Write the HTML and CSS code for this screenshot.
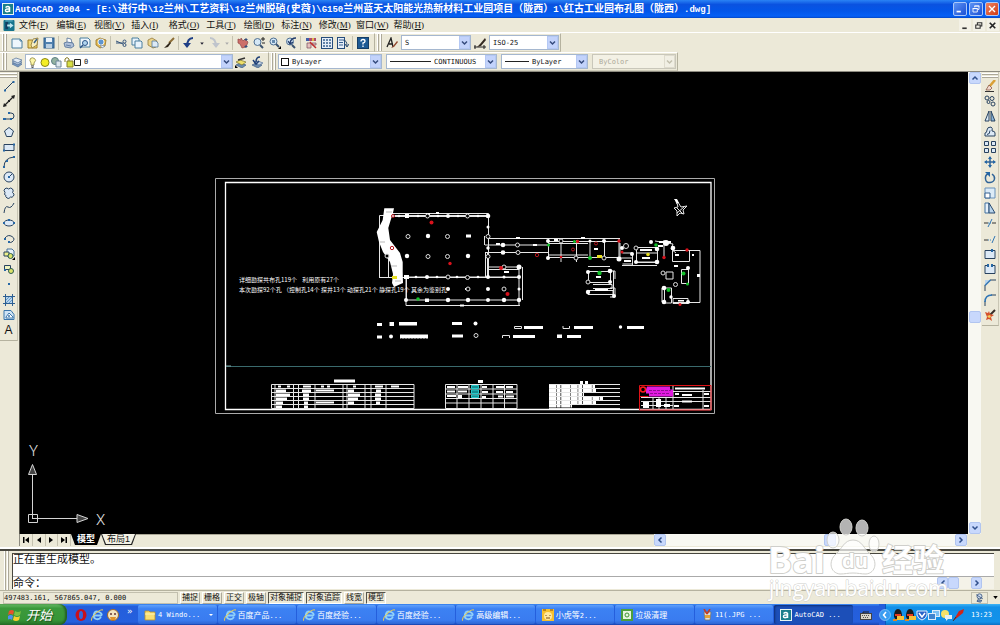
FILE: index.html
```html
<!DOCTYPE html>
<html lang="zh-CN">
<head>
    <meta charset="UTF-8">
    <meta name="viewport" content="width=device-width, initial-scale=1.0">
    <title>AutoCAD 2004</title>
    <link rel="stylesheet" href="styles.css">
</head>
<body>
    <header class="titlebar">
        <svg class="app-icon" viewBox="0 0 12 12"><rect width="12" height="12" fill="#e8f4f4"/><rect x="1" y="1" width="10" height="10" fill="#1b7f8c"/><path d="M3.500 4.500q2.500-2 4 0v4.500M7.500 6q-4-.5-4 1.500t4 .5" fill="none" stroke="#fff" stroke-width="1.500"/></svg>
        <h1><span class="latin">AutoCAD 2004 - [E:\</span>进行中<span class="latin">\12</span>兰州<span class="latin">\</span>工艺资料<span class="latin">\12</span>兰州脱硝<span class="latin">(</span>史薇<span class="latin">)\G150</span>兰州蓝天太阳能光热新材料工业园项目（陇西）<span class="latin">1\</span>红古工业园布孔图（陇西）<span class="latin">.dwg]</span></h1>
        <div class="win-buttons">
            <button aria-label="最小化"><svg viewBox="0 0 14 14"><path d="M3 10h5" stroke="#fff" stroke-width="2"/></svg></button>
            <button aria-label="还原"><svg viewBox="0 0 14 14" fill="none" stroke="#fff"><path d="M5.500 5V3.500h5v4H9M3.500 6.500h5v4h-5zM3 6.500h6M5 3.500h6"/></svg></button>
            <button class="close" aria-label="关闭"><svg viewBox="0 0 14 14"><path d="M3.500 3.500l7 7M10.500 3.500l-7 7" stroke="#fff" stroke-width="1.600"/></svg></button>
        </div>
    </header>

    <nav class="menubar">
        <svg class="doc-icon" viewBox="0 0 12 12"><rect width="12" height="12" rx="1" fill="#17748c"/><path d="M2 2h3v8H2z" fill="#123f62"/><path d="M4 5h3V3l4 3-4 3V7H4z" fill="#bfe6f0"/><path d="M2 1h8" stroke="#7cc5d8"/></svg>
        <div class="menus">
            <button>文件(<u>F</u>)</button>
            <button>编辑(<u>E</u>)</button>
            <button>视图(<u>V</u>)</button>
            <button>插入(<u>I</u>)</button>
            <button>格式(<u>O</u>)</button>
            <button>工具(<u>T</u>)</button>
            <button>绘图(<u>D</u>)</button>
            <button>标注(<u>N</u>)</button>
            <button>修改(<u>M</u>)</button>
            <button>窗口(<u>W</u>)</button>
            <button>帮助(<u>H</u>)</button>
        </div>
        <div class="doc-buttons">
            <button aria-label="最小化图形"><svg viewBox="0 0 10 10"><path d="M3 7.500h4" stroke="#333" stroke-width="1.500"/></svg></button>
            <button aria-label="还原图形"><svg viewBox="0 0 10 10" fill="none" stroke="#333"><path d="M4 4V2.500h4v3H7M2.500 4.500h4v3h-4z"/></svg></button>
            <button aria-label="关闭图形"><svg viewBox="0 0 10 10"><path d="M2.500 2.500l5 5M7.500 2.500l-5 5" stroke="#222" stroke-width="1.500"/></svg></button>
        </div>
    </nav>

    <div class="toolbars">
        <div class="bar-row">
            <div class="band">
                <button class="tool" aria-label="新建"><svg viewBox="0 0 12 12"><path d="M1 2h8l2 2v7H1z" fill="#eef6fc" stroke="#4b7f9f"/><path d="M9 2v2h2" fill="none" stroke="#4b7f9f"/></svg></button>
                <button class="tool" aria-label="打开"><svg viewBox="0 0 12 12"><path d="M1 3h4l1 1h4v7H1z" fill="#f0d878" stroke="#a07c20"/><path d="M4 8l2-6 5-1-1 7-5 3z" fill="#f8efc0" stroke="#8b7430" stroke-width=".8"/><path d="M7 6l3-4" stroke="#3e6288" stroke-width="1.500"/></svg></button>
                <button class="tool" aria-label="保存"><svg viewBox="0 0 12 12"><rect x="1" y="1" width="10" height="10" fill="#4f80ae" stroke="#2c5d8c"/><rect x="3" y="1" width="6" height="4" fill="#e9f2fa"/><rect x="3" y="7" width="6" height="4" fill="#b9cfe2"/></svg></button>
                <span class="sep"></span>
                <button class="tool" aria-label="打印"><svg viewBox="0 0 12 12" stroke="#516f96" stroke-width=".8"><path d="M4 1l4 1 1 4H4z" fill="#fff"/><path d="M1 6l3-1 6 1 1 3-3 2-6-1z" fill="#aebfd8"/><path d="M3 8l5 1" fill="none"/></svg></button>
                <button class="tool" aria-label="打印预览"><svg viewBox="0 0 12 12"><path d="M1 1h8l2 2v7H1z" fill="#eef6fc" stroke="#4b7f9f"/><circle cx="6" cy="6" r="2.500" fill="#b3d6f0" stroke="#2c5588"/><path d="M4 8l-3 3" stroke="#2c5588" stroke-width="1.500"/></svg></button>
                <button class="tool" aria-label="发布"><svg viewBox="0 0 12 12"><path d="M1 3l4-2 6 2-1 6-5 2-4-3z" fill="#e2b94f" stroke="#94742c" stroke-width=".8"/><circle cx="6" cy="5" r="3" fill="#5e95cf" stroke="#fff" stroke-width=".8"/><path d="M5 8l5 1-3 2z" fill="#eef3fa" stroke="#627da1" stroke-width=".6"/></svg></button>
                <span class="sep"></span>
                <button class="tool" aria-label="剪切"><svg viewBox="0 0 12 12" fill="none" stroke="#35547a"><path d="M1 4l7 3M1 6h7" /><circle cx="9.500" cy="4.500" r="1.500"/><circle cx="9.500" cy="8" r="1.500"/></svg></button>
                <button class="tool" aria-label="复制"><svg viewBox="0 0 12 12" fill="#e8f3fb" stroke="#4b7f9f"><path d="M1 1h6l1 1v6H1z"/><path d="M4 4h6l1 1v6H4z"/></svg></button>
                <button class="tool" aria-label="粘贴"><svg viewBox="0 0 12 12"><path d="M1 3l4-2 5 3-1 6-3 1-5-3z" fill="#ecd58b" stroke="#96783a" stroke-width=".8"/><path d="M5 4h4l2 2v4H5z" fill="#dceaf6" stroke="#54789a" stroke-width=".8"/></svg></button>
                <button class="tool" aria-label="特性匹配"><svg viewBox="0 0 12 12"><path d="M11 1L6 6" stroke="#8d6d36" stroke-width="2"/><path d="M7 5l-5 5-1 1 4-1 3-4z" fill="#2d2418"/></svg></button>
                <span class="sep"></span>
                <button class="tool" aria-label="放弃"><svg viewBox="0 0 12 12"><path d="M10 1Q4 1 4 10" fill="none" stroke="#1f3f86" stroke-width="2"/><path d="M0 6h8l-4 5z" fill="#1f3f86"/></svg></button>
                <button class="drop" aria-label="放弃列表"><svg viewBox="0 0 5 5"><path d="M1 2h3L2.500 4z" fill="#223"/></svg></button>
                <button class="tool" aria-label="重做"><svg viewBox="0 0 12 12"><path d="M2 1q6 0 6 9" fill="none" stroke="#bfc4cc" stroke-width="2"/><path d="M4 6h8l-4 5z" fill="#bfc4cc"/></svg></button>
                <button class="drop" aria-label="重做列表"><svg viewBox="0 0 5 5"><path d="M1 2h3L2.500 4z" fill="#aaa"/></svg></button>
                <span class="sep"></span>
                <button class="tool" aria-label="实时平移"><svg viewBox="0 0 12 12"><path d="M1 2l3 1V1l2 3 2-2 3 3-2 5-4 1-2-4-2-1z" fill="#cc6f6a" stroke="#8f4444" stroke-width=".7"/><path d="M9 1v3M7.500 2.500h3M9 8v3M7.500 9.500h3" stroke="#314f7d"/></svg></button>
                <button class="tool" aria-label="实时缩放"><svg viewBox="0 0 12 12"><circle cx="4.500" cy="5" r="3.500" fill="#d5e8f6" stroke="#4e6f92"/><path d="M7 8l3 3" stroke="#3d5470" stroke-width="2"/><path d="M8 2h4M10 0v4M9 6h3" stroke="#222"/></svg></button>
                <button class="tool" aria-label="窗口缩放"><svg viewBox="0 0 12 12"><circle cx="4.500" cy="4.500" r="3.500" fill="#d5e8f6" stroke="#4e6f92"/><rect x="3" y="3" width="3" height="3" fill="#6589ad"/><path d="M7 7l3 3" stroke="#3d5470" stroke-width="2"/><path d="M12 9v3H9z"/></svg></button>
                <button class="tool" aria-label="缩放上一个"><svg viewBox="0 0 12 12"><circle cx="5" cy="4.500" r="3.500" fill="#d5e8f6" stroke="#4e6f92"/><path d="M7 8l3 3" stroke="#3d5470" stroke-width="2"/><path d="M11 1Q6 1 5 6M3 4l2 3 3-2" fill="none" stroke="#223b6b" stroke-width="1.300"/></svg></button>
                <span class="sep"></span>
                <button class="tool" aria-label="特性"><svg viewBox="0 0 12 12"><path d="M1 1h10v3H1z" fill="#b04a6c"/><path d="M1 1h3v3H1z" fill="#3f5ea8"/><path d="M7 1h2v3H7z" fill="#e1b64b"/><path d="M2 6h4v5H2zM7 6h4v2H7z" fill="#e5c1bd" stroke="#7a4a5c" stroke-width=".7"/><path d="M5 5l6 6" stroke="#c02c2c" stroke-width="1.500"/></svg></button>
                <button class="tool" aria-label="设计中心"><svg viewBox="0 0 12 12"><rect x=".5" y=".5" width="11" height="11" fill="#e6eef7" stroke="#264d7c"/><path d="M2 3h8M2 6h8M2 9h8" stroke="#38618f" stroke-width="1.500" stroke-dasharray="2 1"/></svg></button>
                <button class="tool" aria-label="工具选项板"><svg viewBox="0 0 12 12"><rect x=".5" y=".5" width="7" height="11" fill="#e6eef7" stroke="#264d7c"/><path d="M2 3h4M2 5.500h4M2 8h4" stroke="#38618f"/><path d="M6 3q4 0 4 6M8 7l2 3 2-3" fill="none" stroke="#2a4a70"/></svg></button>
                <span class="sep"></span>
                <button class="tool" aria-label="帮助"><svg viewBox="0 0 12 12"><rect x=".5" y=".5" width="11" height="11" fill="#1d5a94" stroke="#143d66"/><path d="M4 4.500q0-2 2-2t2 1.700Q8 5.500 6 6v1.500M6 8.500v1.500" fill="none" stroke="#fff" stroke-width="1.300"/></svg></button>
            </div>
            <div class="band styles">
                <button class="tool" aria-label="文字样式"><svg viewBox="0 0 12 12"><path d="M1 10L5 1l2 9M3 7h4" fill="none" stroke="#222" stroke-width="1.300"/><path d="M11 4L7 9l-2 2 3-1 4-5z" fill="#93482e"/></svg></button>
                <select class="combo text-style" aria-label="文字样式控制"><option>S</option></select>
                <button class="tool" aria-label="标注样式"><svg viewBox="0 0 12 12"><path d="M0 10h12M1 8v4M10 8v4" stroke="#222"/><path d="M11 1L6 7l-3 3 4-1 5-6z" fill="#342a22"/></svg></button>
                <select class="combo dim-style" aria-label="标注样式控制"><option>ISO-25</option></select>
            </div>
        </div>
        <div class="bar-row">
            <div class="band">
                <button class="tool" aria-label="图层特性管理器"><svg viewBox="0 0 12 12" stroke="#4e6d95" stroke-width=".7"><path d="M1 8l4-2 6 2-4 3z" fill="#7e9dc4"/><path d="M1 6l4-2 6 2-4 3z" fill="#b7c9df"/><path d="M1 4l4-2 6 2-4 3z" fill="#e4ecf5"/></svg></button>
                <div class="combo-box layer-box">
                    <svg class="layer-icons" viewBox="0 0 54 12"><path d="M3 7Q1 4 2.500 2.500t4 0T6 7v2H3z" fill="#fdf6a8" stroke="#8a8443" stroke-width=".8"/><path d="M3 10h3M3.500 11.500h2" stroke="#555"/><circle cx="17" cy="6.500" r="4" fill="#f4ee26" stroke="#8b8618"/><circle cx="27" cy="5" r="3.500" fill="#94b3a1" stroke="#5d7f83"/><path d="M28 5h5v6h-5z" fill="#dfe8ee" stroke="#71889a"/><path d="M37 6V3q2-3 4 0v2" fill="none" stroke="#82761f"/><path d="M39 5h6v6h-6z" fill="#d7df45" stroke="#857f28"/><path d="M46.500 3.500h6v6h-6z" fill="#fff" stroke="#222"/></svg>
                    <select class="combo" aria-label="图层"><option>0</option></select>
                </div>
                <button class="tool" aria-label="将对象的图层置为当前"><svg viewBox="0 0 12 12" stroke-width=".7"><path d="M1 9l4-2 6 2-4 3z" fill="#6d8cae" stroke="#3f5c82"/><path d="M1 6l4-2 6 2-4 3z" fill="#efe06a" stroke="#7b7430"/><path d="M3 4l7-2" stroke="#333" stroke-width="1.500"/><path d="M0 9v3h3z"/></svg></button>
                <button class="tool" aria-label="上一个图层"><svg viewBox="0 0 12 12" stroke-width=".7"><path d="M1 9l4-2 6 2-4 3z" fill="#6d8cae" stroke="#3f5c82"/><path d="M3 7l4-2 5 2-4 2z" fill="#c9d6e5" stroke="#54719a"/><path d="M9 1Q5 1 5 6M2 4l3 4 3-3" fill="none" stroke="#1f3f76" stroke-width="1.500"/></svg></button>
            </div>
            <div class="band props">
                <div class="combo-box color-box">
                    <svg class="swatch" viewBox="0 0 8 8"><rect x=".5" y=".5" width="7" height="7" fill="#fff" stroke="#111"/></svg>
                    <select class="combo" aria-label="颜色控制"><option>ByLayer</option></select>
                </div>
                <div class="combo-box line-box">
                    <span class="rule"></span>
                    <select class="combo" aria-label="线型控制"><option>CONTINUOUS</option></select>
                </div>
                <div class="combo-box weight-box">
                    <span class="rule"></span>
                    <select class="combo" aria-label="线宽控制"><option>ByLayer</option></select>
                </div>
                <select class="combo plot-style" aria-label="打印样式控制" disabled><option>ByColor</option></select>
            </div>
        </div>
    </div>

    <main class="workspace">
        <aside class="side draw-tools">
            <div class="tools">
                <button aria-label="直线"><svg viewBox="0 0 12 12"><path d="M1.500 10.500l9-9" class="ln"/><path d="M1 9.500h2v2H1zM9.500 1h2v2h-2z" class="pt"/></svg></button>
                <button aria-label="构造线"><svg viewBox="0 0 12 12"><path d="M1 11L11 1" stroke="#222" stroke-width="1.300"/><path d="M0 12l1-4 3 3zM12 0l-1 4-3-3zM5 5h2v2H5z" fill="#222"/></svg></button>
                <button aria-label="多段线"><svg viewBox="0 0 12 12"><path d="M1 9h7q3 0 3-3T8 3H6" class="ln"/><path d="M0 8h3v2H0zM7 8h2v2H7zM5 2h2v2H5z" class="pt"/></svg></button>
                <button aria-label="正多边形"><svg viewBox="0 0 12 12"><path d="M6 1.500l4.500 3.500-2 5.500h-5L1.500 5z" class="ln shape"/></svg></button>
                <button aria-label="矩形"><svg viewBox="0 0 12 12"><path d="M1 3.500h10v6H1z" class="ln shape"/><path d="M0 8.500h2v2H0zM10 2.500h2v2h-2z" class="pt"/></svg></button>
                <button aria-label="圆弧"><svg viewBox="0 0 12 12"><path d="M1 11Q1 2 11 1" class="ln"/><path d="M0 10h2v2H0zM3 4h2v2H3zM10 0h2v2h-2z" class="pt"/></svg></button>
                <button aria-label="圆"><svg viewBox="0 0 12 12"><circle cx="6" cy="6" r="5" class="ln shape"/><path d="M6 6l3-3" class="ln"/><path d="M5 5h2v2H5z" class="pt"/></svg></button>
                <button aria-label="修订云线"><svg viewBox="0 0 12 12"><path d="M2 5.500Q0 3 2 1.700 4 .3 5.500 2 8 0 9.500 2t0 3.500Q12 7 10.500 9T7.500 10Q6 12.500 4 11T3 8.500Q.5 8 2 5.500z" class="ln shape"/></svg></button>
                <button aria-label="样条曲线"><svg viewBox="0 0 12 12"><path d="M1 11Q2 3 5 5t6-4" class="ln"/></svg></button>
                <button aria-label="椭圆"><svg viewBox="0 0 12 12"><ellipse cx="6" cy="6" rx="5" ry="3" class="ln shape"/><path d="M0 5h2v2H0zM10 5h2v2h-2zM5 2h2v2H5z" class="pt"/></svg></button>
                <button aria-label="椭圆弧"><svg viewBox="0 0 12 12"><path d="M2 5q3-4 7-1.500T9 9Q7 10 6 9" class="ln"/><path d="M1 5h2v2H1zM5 8h2v2H5z" class="pt"/></svg></button>
                <button aria-label="插入块"><svg viewBox="0 0 12 12"><path d="M4 1h5l2 2v5H4z" fill="#e6f1fa" stroke="#477096"/><path d="M1 4h5v4H1z" fill="#eef08b" stroke="#28425f"/><circle cx="7.500" cy="8" r="2.500" fill="#dce46a" stroke="#2c5b50"/><path d="M12 9v3H9z"/></svg></button>
                <button aria-label="创建块"><svg viewBox="0 0 12 12"><path d="M1.500 2.500h6v4h-6z" fill="#eef4c0" stroke="#28425f"/><circle cx="8" cy="8" r="2.500" fill="#dce46a" stroke="#2c5b50"/><path d="M1 6h2v2H1z" class="pt"/></svg></button>
                <button aria-label="点"><svg viewBox="0 0 12 12"><path d="M5 5h2v2H5z" class="pt"/></svg></button>
                <button aria-label="图案填充"><svg viewBox="0 0 12 12"><rect x="2" y="2" width="8" height="8" fill="#b6d4ee"/><path d="M2.500 0v12M9.500 0v12M0 2.500h12M0 9.500h12" stroke="#2d5f92"/><path d="M3 6l3-3M3 9l6-6M6 9l3-3" stroke="#447fb5" stroke-width=".7"/></svg></button>
                <button aria-label="面域"><svg viewBox="0 0 12 12"><path d="M1 1.500h7l3 4v5H1z" fill="#cfe4f5" stroke="#3b76ab"/><path d="M3 8l3-4 4 4v1H3z" fill="#fff" stroke="#3b76ab"/><circle cx="6" cy="7" r="1" fill="#3b76ab"/></svg></button>
                <button class="mtext" aria-label="多行文字">A</button>
            </div>
        </aside>

        <section class="document">
            <div class="canvas">
                <svg class="drawing" viewBox="20 72 948 462" preserveAspectRatio="xMinYMin meet">
                    <!-- sheet frames -->
                    <path d="M215.500 178.500h499v235h-499z" fill="none" stroke="#aaa"/>
                    <path d="M225.500 182.500h485.500v227h-485.500z" fill="none" stroke="#fff" stroke-width="1.300"/>
                    <path d="M226 366.500h485" stroke="#3a6a6d"/>
                    <path d="M226 366h5" stroke="#7fa6a8"/>

                    <!-- main plant outline -->
                    <g class="thin">
                        <path d="M379.500 277v-61.500h108M390 213.500h98.500v64M388.500 250v27M379 277.500h141M406 277v28.500h114M406 300h114M519 267v39M522.500 267v33M487 267h33M487 269.500h32M485.500 252v25M487.500 252v25M406 216h82M391 216.500h97M406 277h113M406.500 276v25"/>
                        <path d="M488 238.500h132M485 245h63M485 252.500h63M484.500 236v9M548.500 238v21M548 241.500h72M548 243.500h40M548 255h40M548 257.500h72M561 240v22M576.500 240v22M590 240v18M604.500 241v17M619 238v20"/>
                        <path d="M622.500 253h10v11h-10M632.500 253v12M622 265.500h35M636.500 247.500h21v15h-21zM636 253h21M637 262h20M619 258h14M620 243v17M655 241l18 3-2 5 5 4M664 240v17M672.500 250.500h17v11h-17zM686 250.500h14v52h-27M681.500 269.500h7v14h-7zM666 272h7v7h-7zM664.500 288h7v15h-7zM662 288v14M673 298.500h15v5h-15zM588.500 271.500h22v11h-22zM588 266.500h22M593 284.500h19v4h-19M588 290.500h25v4h-25zM613.500 271v26M610 271h5v8M610 288h5v9h-5"/>
                    </g>
                    <path class="solid" d="M384.300 208.300h9.700l-1 4.400-2.300 7.300-2.400 8 1.700 12 10 13 2.700 9v10l.3 11-9 4-2-4 1-9-3-12-7-10-4-10-2.300-10 6-12z"/>
                    <path d="M386 212h6M380 242h5M391 266h6M395 281h6" stroke="#888" stroke-width=".6"/>

                    <!-- boreholes: solid -->
                    <g class="solid">
                        <path d="M405 214h4v4h-4zM466 234.500h5v3h-5zM404 275h5v4h-5zM425 298.500h4v3.500h-4zM465 288h5v2h-5zM533 244h4v2h-4zM496 243h4v2h-4zM426 213h4v2h-4zM436 212h3v2h-3zM554 239h4v2h-4zM581 237h4v2h-4zM504 271h5v2h-5zM460 304.500h4v2h-4zM594 248h4v2h-4zM516 237h4v2h-4z"/>
                        <circle cx="399" cy="216" r="1.300"/><circle cx="418" cy="216" r="1.300"/><circle cx="438" cy="216" r="1.300"/><circle cx="448" cy="216" r="2"/><circle cx="458" cy="216" r="1.300"/><circle cx="478" cy="216" r="1.300"/><circle cx="488" cy="216" r="2.300"/><circle cx="488" cy="227" r="1.500"/>
                        <circle cx="428" cy="236" r="2.200"/><circle cx="407" cy="256" r="2.200"/><circle cx="468" cy="256" r="2.200"/><circle cx="488" cy="248" r="1.700"/>
                        <circle cx="427" cy="277" r="2"/><circle cx="416" cy="277" r="1.300"/><circle cx="437" cy="277" r="1.300"/><circle cx="457" cy="277" r="1.300"/><circle cx="478" cy="277" r="1.300"/><circle cx="488" cy="277" r="2"/><circle cx="504" cy="277" r="1.500"/><circle cx="519" cy="277" r="2"/><circle cx="519" cy="267" r="2.500"/>
                        <circle cx="448" cy="289" r="2"/><circle cx="488" cy="289" r="2"/><circle cx="519" cy="289" r="1.500"/>
                        <circle cx="406" cy="300" r="2"/><circle cx="448" cy="300" r="2.200"/><circle cx="468" cy="300" r="2.200"/><circle cx="488" cy="300" r="2"/><circle cx="504" cy="300" r="2.200"/><circle cx="519" cy="300" r="2.200"/>
                        <circle cx="503" cy="245" r="2.300"/><circle cx="503" cy="252.500" r="2.300"/><circle cx="548" cy="241" r="2"/><circle cx="548" cy="258" r="2"/><circle cx="590" cy="241" r="1.500"/><circle cx="604" cy="241" r="2"/>
                        <circle cx="619" cy="259" r="2.500"/><circle cx="622" cy="248" r="2"/><circle cx="632" cy="254" r="2"/><circle cx="636" cy="262" r="2"/><circle cx="657" cy="262" r="2.300"/><circle cx="657" cy="249" r="2.300"/><circle cx="651" cy="242" r="2"/><circle cx="673" cy="248" r="2.300"/><circle cx="666" cy="243" r="3"/>
                        <circle cx="588" cy="272" r="2"/><circle cx="610" cy="271" r="2.300"/><circle cx="610" cy="282" r="2"/><circle cx="588" cy="292" r="2.200"/><circle cx="614" cy="296" r="2"/><circle cx="664" cy="288" r="2.300"/><circle cx="664" cy="302" r="2.300"/><circle cx="671" cy="297" r="1.700"/><circle cx="688" cy="302" r="2"/><circle cx="688" cy="268" r="2"/>
                        <path d="M596 276h5v2h-5zM640 249h12v2h-12zM624 260h7v2h-7zM675 254h4v2h-4zM692 254h2v2h-2zM674 265h4v2h-4zM697 274h3v3h-3zM678 300h6v1.500h-6zM595 289h13v2h-13zM642 257h8v2h-8zM659 241h12v2h-12zM658 245h5v2h-5z"/>
                    </g>
                    <!-- boreholes: open -->
                    <g class="ring">
                        <circle cx="427.500" cy="216" r="2"/><circle cx="467.500" cy="216" r="2"/><circle cx="408" cy="236.500" r="2"/><circle cx="447.500" cy="236.500" r="2"/><circle cx="488" cy="236.500" r="2"/>
                        <circle cx="387" cy="256" r="2"/><circle cx="428" cy="256.500" r="2"/><circle cx="447.500" cy="256.500" r="2"/><circle cx="488" cy="256.500" r="2"/><circle cx="448" cy="277" r="2"/><circle cx="467.500" cy="277.500" r="2"/>
                        <circle cx="468" cy="289" r="2"/><circle cx="504" cy="289" r="2"/><circle cx="517.500" cy="245" r="2"/><circle cx="518" cy="252.500" r="2"/><circle cx="504" cy="267" r="2"/><circle cx="561" cy="241" r="2"/><circle cx="576" cy="258" r="2"/><circle cx="604" cy="258" r="2"/>
                        <circle cx="626" cy="246" r="2.500"/><circle cx="588" cy="282" r="2"/><circle cx="663" cy="273" r="2"/><circle cx="675.500" cy="284.500" r="2"/><circle cx="636" cy="248" r="2"/>
                    </g>
                    <g fill="#d8121c">
                        <circle cx="431.500" cy="222.500" r="2"/><circle cx="450" cy="263.500" r="1.700"/><circle cx="501" cy="268" r="2"/><circle cx="507.500" cy="294" r="2"/><circle cx="577.500" cy="241.500" r="1.700"/><circle cx="619" cy="241" r="1.700"/><circle cx="622" cy="252" r="1.500"/><circle cx="664" cy="257.500" r="1.700"/><circle cx="687" cy="250" r="1.700"/><circle cx="680" cy="304.500" r="1.500"/><circle cx="561" cy="257" r="1.300"/>
                    </g>
                    <g fill="none" stroke="#b5141c"><circle cx="392" cy="248" r="1.700"/><circle cx="393" cy="216" r="1.500"/><circle cx="537" cy="255" r="1.700"/><circle cx="596" cy="243.500" r="1.500"/><circle cx="573" cy="249.500" r="1.500"/></g>
                    <g fill="#12c22a"><circle cx="418" cy="299" r="1.800"/><circle cx="548.500" cy="245" r="1.500"/><circle cx="590" cy="258" r="2"/><circle cx="574.500" cy="241.500" r="1.500"/><circle cx="599.500" cy="273" r="2.200"/><circle cx="683.500" cy="273.500" r="2"/><circle cx="687.500" cy="284" r="1.500"/><circle cx="668.500" cy="290" r="2"/><circle cx="656" cy="245" r="1.800"/></g>
                    <g fill="#e8e020"><path d="M392 276h5v3h-5zM597 255h5v3h-5z"/><circle cx="648" cy="254.500" r="1.800"/></g>

                    <!-- north arrow -->
                    <path d="M676 199l5 8 6-1-4 4 1 4-4-1-3 3v-5l-3-3 4-1zM675 199l2 5M677 208l6 6M684 207l-7 6" fill="none" stroke="#e8e8e8" stroke-width="1"/>
                    <path d="M674 199h3l2 4h-2z" fill="#fff"/>

                    <text class="note" x="239" y="282">详细勘探共布孔119个&#160;&#160;&#160;&#160;利用原有27个</text>
                    <text class="note" x="239" y="292">本次勘探92个孔 （控制孔14个 探井13个 动探孔21个 静探孔19个 其余为鉴别孔</text>

                    <!-- legend -->
                    <path class="solid" d="M377 323h5v3h-5zM389.500 322h4.500v4h-4.500zM399 322h18v3.500h-18zM452 322h10v3h-10zM377 335.500h5v3h-5zM400 334.500h28v4h-28zM452 334.500h11v3h-11zM524 326h19v3h-19zM574 326h19v3h-19zM627 326h17v3h-17zM513 335h22v3h-22zM557 334.500h5v3.500h-5zM567 335h14v3h-14z"/>
                    <path d="M401 339h26" stroke="#000" stroke-width="1" stroke-dasharray="1 2"/>
                    <path class="thin" d="M514.500 328.500v-2h7v2zM563 326v2.500h6.500V326M502.500 338v-2.500h7v2.500"/>
                    <g class="solid"><circle cx="475.500" cy="323.500" r="2"/><circle cx="391" cy="336.500" r="2"/><circle cx="620.500" cy="327" r="1.700"/></g>
                    <circle class="ring" cx="476" cy="335.500" r="2"/>

                    <!-- borehole tables -->
                    <path class="thin" d="M271.500 384.500H414v24H271.500zM271.500 388.500H414M271.500 392.500H414M271.500 396.500H414M271.500 400.500H414M271.500 404.500H414M275 384v24M293.500 384v24M298.500 384v24M315 384v24M343 384v24M347 384v24M365 384v24M371 384v24M386 384v24"/>
                    <path class="solid" d="M334 379.500h21v3h-21zM278 385.500h3v2h-3zM287 385.500h3v2h-3zM303 385.500h8v2h-8zM321 385.500h3v2h-3zM327 385.500h3v2h-3zM353 385.500h3v2h-3zM375 385.500h8v2h-8zM391 385.500h8v2h-8zM276 389.500h10v2.500h-10zM276 393.500h14v2.500h-14zM276 397.500h11v2.500h-11zM276 401.500h7v2.500h-7zM276 405.500h6v2.500h-6zM302 389.500h9v2.500h-9zM303 393.500h6v2.500h-6zM303 397.500h6v2.500h-6zM304 401.500h4v2.500h-4zM304 405.500h4v2.500h-4zM316 389.500h18v2h-18zM316 401.500h18v2h-18zM348 389.500h6v2.500h-6zM348 393.500h12v2.500h-12zM348 397.500h10v2.500h-10zM348 401.500h6v2.500h-6zM376 389.500h5v2.500h-5zM375 393.500h6v2.500h-6zM375 397.500h6v2.500h-6zM376 401.500h4v2.500h-4z"/>
                    <path class="thin" d="M445.500 384.500H517v24h-71.500zM445.500 389H517M445.500 394H517M445.500 398.500H517M445.500 403H517M457 384v24M469 384v24M481 384v24M493 384v24M504.500 384v24"/>
                    <path class="solid" d="M478 380h5v3h-5zM447 386h8v2h-8zM458 386h10v2h-10zM447 390.500h8v2h-8zM458 390.500h9v2h-9zM447 395h9v2h-9zM458 395h4v3h-4zM482 386h5v2h-5zM482 391h6v2h-6zM482 396h4v2h-4zM496 386h8v2h-8zM506 386h7v2h-7zM496 391h7v2h-7zM506 391h7v2h-7zM498 395.500h5v2h-5zM506 395.500h8v2h-8z"/>
                    <path d="M471.500 385.500h7v3h-7zM471.500 390h7v3.500h-7zM471.500 395h7v2.500h-7z" fill="#178e92" stroke="#25c9cc"/>

                    <!-- general notes -->
                    <path class="thin" d="M549 384.500h71M549 388.500h71M549 392.500h71M549 396.500h71M549 400.500h71M549 404.500h71M549 408.500h71"/>
                    <path d="M549 386.500h46M549 390.500h47M549 394.500h35M549 398.500h54M549 402.500h47M549 406h23" stroke="#fff" stroke-width="3" stroke-dasharray="7 .5 4 .7 9 .5"/>
                    <path class="solid" d="M580 381h3v3h-3zM585 381h3v3h-3z"/>

                    <!-- title block -->
                    <path class="thin" d="M673 386v23M653 397v12M659 397v12M666 397v12M641 397.500h70M641 401.500h70M641 405.500h32M703 390v19M673 391.500h38"/>
                    <path d="M647 386.500h23v3h3v7h-24v-3h-3v-4z" fill="#e11be0"/>
                    <path d="M649 390.500h22M650 393.500h20" stroke="#6b0a72" stroke-width=".7" stroke-dasharray="3 1"/>
                    <path class="solid" d="M675 387.500h30v2h-30zM682 394h10v2h-10zM682 400.500h10v2h-10zM643 402h6v6h-6zM656 399h5v8h-5zM664 404h6v3h-6zM704 393h5v2h-5zM704 405h5v2h-5zM675 393h4v2h-4zM674 405h5v2h-5z"/>
                    <circle cx="643" cy="389.500" r="2.500" fill="none" stroke="#ff1c1c" stroke-width="1.500"/>
                    <path d="M639.500 385.500h71.500v24.500h-71.500zM639.500 396.500h9" fill="none" stroke="#e01218"/>

                    <!-- UCS icon -->
                    <g fill="none" stroke="#d4d4d4">
                        <path d="M28.500 514.500h9v8h-9zM32.500 519V475M33 518.500h44"/>
                        <path d="M32.500 464.500l-4 10h8zM88 518.500l-11-4v8z" fill="#444"/>
                    </g>
                    <text class="axis" x="29" y="456">Y</text>
                    <text class="axis" x="96" y="525">X</text>
                </svg>
            </div>
            <div class="vscroll">
                <button class="sb" aria-label="向上滚动"><svg viewBox="0 0 8 8"><path d="M1.500 5.500L4 3l2.500 2.500" /></svg></button>
                <span class="track"></span>
                <span class="thumb"></span>
                <span class="track"></span>
                <button class="sb" aria-label="向下滚动"><svg viewBox="0 0 8 8"><path d="M1.500 2.500L4 5l2.500-2.500"/></svg></button>
            </div>
            <div class="tabrow">
                <div class="tab-nav">
                    <button aria-label="第一个"><svg viewBox="0 0 8 8"><path d="M1 1h1.500v6H1zM7 1v6L3 4z"/></svg></button>
                    <button aria-label="上一个"><svg viewBox="0 0 8 8"><path d="M6 1v6L2 4z"/></svg></button>
                    <button aria-label="下一个"><svg viewBox="0 0 8 8"><path d="M2 1v6l4-3z"/></svg></button>
                    <button aria-label="最后一个"><svg viewBox="0 0 8 8"><path d="M1 1v6l4-3zM5.500 1H7v6H5.500z"/></svg></button>
                </div>
                <button class="sheet current">模型</button>
                <button class="sheet">布局1</button>
                <span class="tab-fill"></span>
                <div class="hscroll">
                    <button class="sb" aria-label="向左滚动"><svg viewBox="0 0 8 8"><path d="M5.500 1.500L3 4l2.500 2.500"/></svg></button>
                    <span class="track"></span>
                    <span class="thumb"></span>
                    <span class="track"></span>
                    <button class="sb" aria-label="向右滚动"><svg viewBox="0 0 8 8"><path d="M2.500 1.500L5 4 2.500 6.500"/></svg></button>
                </div>
            </div>
        </section>

        <aside class="side modify-tools">
            <div class="tools">
                <button aria-label="删除"><svg viewBox="0 0 12 12"><path d="M11 0L5 7" stroke="#d9a036" stroke-width="2.500"/><path d="M5 5l3 3-2 2H2z" fill="#f1d9d0" stroke="#8c5a48" stroke-width=".8"/><path d="M1 11.500h9" stroke="#333"/></svg></button>
                <button aria-label="复制对象"><svg viewBox="0 0 12 12" class="ln"><circle cx="3" cy="3" r="2"/><circle cx="8" cy="3.500" r="2"/><circle cx="4.500" cy="7" r="1.500"/><circle cx="9" cy="9" r="2"/></svg></button>
                <button aria-label="镜像"><svg viewBox="0 0 12 12" stroke="#28425f"><path d="M5 1v10H1z" fill="#dcebf7"/><path d="M7 1v10h4z" fill="#8ab4d8"/></svg></button>
                <button aria-label="偏移"><svg viewBox="0 0 12 12"><path d="M1 10V7q2 0 2-3t4-3q2 1 1 4 3 0 3 2v3z" class="ln shape"/><path d="M3 8.500q3 0 3-4" class="ln"/></svg></button>
                <button aria-label="阵列"><svg viewBox="0 0 12 12"><path d="M.5.500h4v4h-4zM7.500.500h4v4h-4zM.5 7.500h4v4h-4zM7.500 7.500h4v4h-4z" class="ln shape"/></svg></button>
                <button aria-label="移动"><svg viewBox="0 0 12 12"><path d="M6 1v10M1 6h10" stroke="#2f6398" stroke-width="1.500"/><path d="M6 0l2 3H4zM6 12l2-3H4zM0 6l3-2v4zM12 6L9 4v4z" class="pt"/></svg></button>
                <button aria-label="旋转"><svg viewBox="0 0 12 12"><path d="M8 2q3 2 2.500 5T6 10.500 1.500 7 4 2" fill="none" stroke="#2f6398" stroke-width="1.500"/><path d="M1 0h5v5z" class="pt"/></svg></button>
                <button aria-label="缩放"><svg viewBox="0 0 12 12"><path d="M1 1h10v10H1z" fill="#dcebf7" stroke="#6891ba"/><path d="M1 6h5v5H1z" fill="#fff" stroke="#35618f"/></svg></button>
                <button aria-label="拉伸"><svg viewBox="0 0 12 12"><path d="M1 1h4v10H1z" fill="#e7f1fa" stroke="#41719f"/><path d="M5 1l6 10H5z" fill="#b9d5ec" stroke="#27496f"/></svg></button>
                <button aria-label="修剪"><svg viewBox="0 0 12 12"><path d="M0 6h4M8 6h4" stroke="#333"/><path d="M4 6h3" stroke="#3d82bd" stroke-dasharray="1 1"/><path d="M4 10l4-8" stroke="#2f75b5"/></svg></button>
                <button aria-label="延伸"><svg viewBox="0 0 12 12"><path d="M0 7h4" stroke="#333"/><path d="M4 7h4" stroke="#3d82bd" stroke-dasharray="1 1"/><path d="M8 10l3-7" stroke="#2f75b5"/></svg></button>
                <button aria-label="打断于点"><svg viewBox="0 0 12 12"><path d="M1 2.500h10v8H1z" class="ln shape"/><path d="M7 1h2v3H7z" class="pt"/></svg></button>
                <button aria-label="打断"><svg viewBox="0 0 12 12"><path d="M4 2.500H1v8h10v-8H8" class="ln shape"/><path d="M3 1h2v3H3zM7 1h2v3H7z" class="pt"/></svg></button>
                <button aria-label="倒角"><svg viewBox="0 0 12 12"><path d="M1 12V6M6 1h6" class="ln"/><path d="M1 1v5l5-5z" fill="#b9d5ec"/><path d="M1 6.500L6.500 1" stroke="#2f75b5" stroke-width="1.500"/></svg></button>
                <button aria-label="圆角"><svg viewBox="0 0 12 12"><path d="M1 12V7M7 1h5" class="ln"/><path d="M1 8Q1 1 8 1" fill="none" stroke="#2f75b5" stroke-width="1.500"/></svg></button>
                <button aria-label="分解"><svg viewBox="0 0 12 12"><path d="M11 1L6 6" stroke="#3a2d28" stroke-width="2"/><path d="M1 3l3 1 1-2 1 3 4 1-3 2 1 4-3-2-3 1 1-3z" fill="#d5512a"/><path d="M3 7l3-1 1 2-2 1z" fill="#f4cf5e"/></svg></button>
            </div>
        </aside>
    </main>

    <section class="command">
        <div class="cmd-box">
            <p class="cmd-log">正在重生成模型。</p>
            <div class="cmd-line">
                <label for="cmd">命令：</label>
                <input id="cmd" type="text">
                <div class="cmd-scroll">
                    <button class="sb" aria-label="命令行向左"><svg viewBox="0 0 8 8"><path d="M5.500 1.500L3 4l2.500 2.500"/></svg></button>
                    <span class="thumb"></span>
                    <span class="track"></span>
                    <button class="sb" aria-label="命令行向右"><svg viewBox="0 0 8 8"><path d="M2.500 1.500L5 4 2.500 6.500"/></svg></button>
                </div>
            </div>
        </div>
    </section>

    <div class="statusbar">
        <output class="coords">497483.161, 567865.047, 0.000</output>
        <button>捕捉</button>
        <button>栅格</button>
        <button>正交</button>
        <button>极轴</button>
        <button class="on">对象捕捉</button>
        <button class="on">对象追踪</button>
        <button>线宽</button>
        <button class="on">模型</button>
        <div class="status-tray">
            <svg class="comm" viewBox="0 0 12 12"><circle cx="6" cy="4" r="3" fill="#cfdcec" stroke="#38547e"/><path d="M2 2l8 5M4 8l5 1-2 2-4-1z" fill="#8aa3c4" stroke="#38547e"/></svg>
            <svg class="more" viewBox="0 0 6 4"><path d="M0 0h6L3 4z"/></svg>
        </div>
    </div>

    <footer class="taskbar">
        <button class="start">
            <svg viewBox="0 0 14 14"><path d="M1 3q3-2 5 0l-1 4q-2-2-5 0z" fill="#e8512b"/><path d="M7 3q3 2 6 0l-1 4q-3 2-6 0z" fill="#7fc242"/><path d="M0 8q3-2 5 0l-1 4q-2-2-5 0z" fill="#4f8ef0"/><path d="M6 8q3 2 6 0l-1 4q-3 2-6 0z" fill="#f8cf2c"/></svg>
            开始
        </button>
        <div class="quick">
            <a href="#opera" aria-label="Opera"><svg viewBox="0 0 12 12"><ellipse cx="6" cy="6" rx="5.500" ry="6" fill="#c9101b"/><ellipse cx="6" cy="6" rx="2" ry="4" fill="#3268dd"/></svg></a>
            <a href="#ie" aria-label="Internet Explorer"><svg viewBox="0 0 12 12"><path d="M10 8q-2 3-5 2T3 5t5-2 2 3.500H3" fill="none" stroke="#8fd0fa" stroke-width="1.800"/><path d="M0 12Q0 8 5 4t7-3" fill="none" stroke="#f1cf4a"/></svg></a>
            <a href="#player" aria-label="播放器"><svg viewBox="0 0 12 12"><circle cx="6" cy="6" r="5.500" fill="#f3e5c2" stroke="#a46a24"/><circle cx="4" cy="5" r="1" fill="#633"/><circle cx="8" cy="5" r="1" fill="#633"/><path d="M3 8h6l-1 3H4z" fill="#e0942c"/></svg></a>
            <a class="chev" href="#more">»</a>
        </div>
        <div class="tasks">
            <button><svg viewBox="0 0 12 12"><path d="M1 2h4l1 1h5v8H1z" fill="#f8df73" stroke="#b9902a" stroke-width=".8"/><path d="M1 5h10" stroke="#fff3b8"/></svg><span>4 Windo...</span><i class="caret"></i></button>
            <button><svg viewBox="0 0 12 12"><path d="M10 8q-2 3-5 2T3 5t5-2 2 3.500H3" fill="none" stroke="#8fd0fa" stroke-width="1.800"/><path d="M0 12Q0 8 5 4t7-3" fill="none" stroke="#f1cf4a"/></svg><span><b>百度产品</b>...</span></button>
            <button><svg viewBox="0 0 12 12"><path d="M10 8q-2 3-5 2T3 5t5-2 2 3.500H3" fill="none" stroke="#8fd0fa" stroke-width="1.800"/><path d="M0 12Q0 8 5 4t7-3" fill="none" stroke="#f1cf4a"/></svg><span><b>百度经验</b>...</span></button>
            <button><svg viewBox="0 0 12 12"><path d="M10 8q-2 3-5 2T3 5t5-2 2 3.500H3" fill="none" stroke="#8fd0fa" stroke-width="1.800"/><path d="M0 12Q0 8 5 4t7-3" fill="none" stroke="#f1cf4a"/></svg><span><b>百度经验</b>...</span></button>
            <button><svg viewBox="0 0 12 12"><path d="M10 8q-2 3-5 2T3 5t5-2 2 3.500H3" fill="none" stroke="#8fd0fa" stroke-width="1.800"/><path d="M0 12Q0 8 5 4t7-3" fill="none" stroke="#f1cf4a"/></svg><span><b>高级编辑</b>...</span></button>
            <button><svg viewBox="0 0 12 12"><rect width="12" height="12" fill="#f6c12f"/><circle cx="6" cy="7" r="4" fill="#ffe9a0"/><path d="M1 1h3M8 1h3M4 6v1M8 6v1M4 9h4" stroke="#7c4a10"/></svg><span><b>小虎等</b>2...</span></button>
            <button><svg viewBox="0 0 12 12"><rect width="12" height="12" fill="#4c9f3c"/><rect x="2" y="2" width="8" height="8" fill="#e6f5df"/><circle cx="6" cy="6" r="2" fill="none" stroke="#3f9630"/></svg><span><b>垃圾清理</b></span></button>
            <button><svg viewBox="0 0 12 12"><path d="M3 3h7l-1 8H4z" fill="#d9dfe4" stroke="#7b6d55" stroke-width=".7"/><path d="M3 0l3 5M9 0L6 5" stroke="#c53b22" stroke-width="1.500"/><path d="M4 6h5v3H4z" fill="#e3a338"/></svg><span>11(.JPG ...</span></button>
            <button class="active"><svg viewBox="0 0 12 12"><rect width="12" height="12" fill="#e8f4f4"/><rect x="1" y="1" width="10" height="10" fill="#1b7f8c"/><path d="M3.500 4.500q2.500-2 4 0v4.500M7.500 6q-4-.5-4 1.500t4 .5" fill="none" stroke="#fff" stroke-width="1.500"/></svg><span>AutoCAD ...</span></button>
        </div>
        <button class="lang" aria-label="输入法"><svg viewBox="0 0 12 12"><rect x=".5" y="4.500" width="11" height="6" fill="#d9d5c8" stroke="#444"/><path d="M2 6.500h8M3 8.500h6" stroke="#555" stroke-dasharray="1 1"/><path d="M3 4V3h6" fill="none" stroke="#222"/></svg></button>
        <div class="tray">
            <button class="hide" aria-label="隐藏图标"><svg viewBox="0 0 12 12"><circle cx="6" cy="6" r="5.500" fill="#3a9df2" stroke="#a4d4fb" stroke-width=".6"/><path d="M7 3L4.500 6 7 9" fill="none" stroke="#fff" stroke-width="1.500"/></svg></button>
            <svg viewBox="0 0 12 12"><path d="M2 8q0-8 4-8t4 8l-2 3H4z" fill="#1b1b1b"/><path d="M3 5h6v2H3z" fill="#e33b20"/><path d="M5 7h7v4H5z" fill="#f5c33a"/><path d="M1 10h4v2H1z" fill="#e58a1e"/></svg>
            <svg viewBox="0 0 12 12"><path d="M2 8q0-8 4-8t4 8l-2 3H4z" fill="#1b1b1b"/><path d="M3 5h6v2H3z" fill="#e33b20"/><path d="M5 7h7v4H5z" fill="#f5c33a"/><path d="M1 10h4v2H1z" fill="#e58a1e"/></svg>
            <svg viewBox="0 0 12 12"><path d="M1 2h10v4q-1 4-5 5-4-1-5-5z" fill="#2862c8" stroke="#e7f2ff"/><path d="M3 4l3 4 3-4" fill="none" stroke="#fff" stroke-width="1.500"/></svg>
            <svg viewBox="0 0 12 12"><rect x="4.500" y="1.500" width="7" height="6" fill="#7ac0f4" stroke="#dcecfa"/><rect x=".5" y="4.500" width="7" height="6" fill="#3e84d0" stroke="#dcecfa"/></svg>
            <svg viewBox="0 0 12 12"><circle cx="5" cy="5" r="4" fill="#f6e16a"/><path d="M5 6h7v4H8l-2 2V10H5z" fill="#e5eef5"/></svg>
            <svg viewBox="0 0 12 12"><path d="M1 12l3-5 3-5 5-2-1 4-5 4z" fill="#cf2418"/><path d="M1 12l3-4" stroke="#333"/></svg>
            <time>13:23</time>
        </div>
    </footer>

    <!-- site mark over the lower right corner -->
    <svg class="watermark" viewBox="0 0 184 90" aria-hidden="true">
        <g class="paw">
            <ellipse cx="65" cy="31" rx="6" ry="8"/>
            <ellipse cx="78" cy="18" rx="6" ry="8"/>
            <ellipse cx="94" cy="19" rx="6" ry="8"/>
            <ellipse cx="106" cy="35" rx="5" ry="8"/>
            <path d="M85 31c9 0 11 9 17 14 8 7 6 19-4 20-5 0-8-1-13-1s-8 1-13 1c-10-1-12-13-4-20 6-5 8-14 17-14z"/>
        </g>
        <text class="brand" x="0" y="64">Bai</text>
        <text class="du" x="74" y="59">du</text>
        <text class="cn" x="114" y="62">经验</text>
        <text class="site" x="1" y="87">jingyan.baidu.com</text>
    </svg>
</body>
</html>
```
FILE: styles.css
```css
* {
    box-sizing: border-box;
}
body {
    position: relative;
    display: flex;
    flex-direction: column;
    height: 100vh;
    margin: 0;
    overflow: hidden;
    background: #ece9d8;
    color: #111;
    font-family: "Liberation Sans", "Noto Sans CJK SC", sans-serif;
    font-size: 9px;
}
button, select, input {
    margin: 0;
    padding: 0;
    border: none;
    border-radius: 0;
    background: none;
    color: inherit;
    font: inherit;
}
svg {
    display: block;
}

/* title */
.titlebar {
    display: flex;
    align-items: center;
    height: 18px;
    padding-left: 2px;
    background: linear-gradient(#2a83f5, #0a52e0 25%, #0356e8 60%, #0560f6 90%, #0346c4);
    color: #fff;
}
.app-icon {
    width: 12px;
    height: 12px;
    margin-right: 1px;
}
.titlebar h1 {
    flex: 1;
    margin: 0;
    overflow: hidden;
    white-space: nowrap;
    font-size: 10px;
    font-weight: bold;
    line-height: 16px;
}
.latin {
    font-family: "Liberation Mono", monospace;
    font-size: 9px;
}
.win-buttons {
    display: flex;
    gap: 2px;
    padding-right: 1px;
}
.win-buttons button {
    width: 14px;
    height: 14px;
    border: 1px solid #a9c8fa;
    border-radius: 2px;
    background: linear-gradient(135deg, #5c93f5, #1b50d4);
}
.win-buttons .close {
    background: linear-gradient(135deg, #ee8463, #d03a14);
}
.win-buttons svg {
    width: 12px;
    height: 12px;
}

/* menus */
.menubar {
    display: flex;
    align-items: center;
    height: 15px;
    padding-left: 3px;
    border-bottom: 1px solid #fff;
}
.doc-icon {
    width: 12px;
    height: 11px;
    margin-right: 4px;
}
.menus {
    display: grid;
    grid-template-columns: repeat(11, 1fr);
    width: 412px;
}
.menus button {
    text-align: left;
    white-space: nowrap;
    font-family: "Liberation Serif", "Noto Sans CJK SC", serif;
    line-height: 13px;
}
.doc-buttons {
    display: flex;
    gap: 2px;
    margin-left: auto;
    padding-right: 1px;
}
.doc-buttons button {
    width: 12px;
    height: 12px;
    background: #f3f1e6;
}
.doc-buttons svg {
    width: 11px;
    height: 11px;
}

/* toolbars */
.toolbars {
    border-bottom: 1px solid #8d8b80;
}
.bar-row {
    display: flex;
    height: 19px;
}
.band {
    display: flex;
    align-items: center;
    padding: 0 3px 0 9px;
    border-top: 1px solid #fff;
    border-right: 1px solid #b5b29f;
    border-bottom: 1px solid #d0cdbb;
    background: linear-gradient(90deg, transparent 2px, #fff 2px 3px, #aca899 3px 4px, transparent 4px 5px, #fff 5px 6px, #aca899 6px 7px, transparent 7px);
}
.styles {
    gap: 1px;
    padding-right: 1px;
}
.tool {
    display: flex;
    align-items: center;
    justify-content: center;
    width: 16px;
    height: 16px;
}
.tool svg {
    width: 12px;
    height: 12px;
}
.sep {
    width: 1px;
    height: 14px;
    margin: 0 2px 0 1px;
    background: #c5c2b0;
}
.drop {
    width: 9px;
}
.drop svg {
    width: 6px;
    height: 6px;
    margin: auto;
}
.combo {
    appearance: none;
    height: 15px;
    padding-left: 3px;
    border: 1px solid #a5b7cf;
    background: #fff url("data:image/svg+xml,%3Csvg xmlns='http://www.w3.org/2000/svg' width='11' height='13'%3E%3Crect x='.5' y='.5' width='10' height='12' fill='%23c3d3fb' stroke='%23b4c8f4'/%3E%3Cpath d='M3 5.500l2.500 2.500L8 5.500' fill='none' stroke='%23354b7d' stroke-width='1.500'/%3E%3C/svg%3E") no-repeat right center;
    font-family: "DejaVu Sans Mono", "Noto Sans CJK SC", monospace;
    font-size: 7px;
}
.combo:disabled {
    border-color: #c9c7ba;
    background: #f3f1e5 url("data:image/svg+xml,%3Csvg xmlns='http://www.w3.org/2000/svg' width='11' height='13'%3E%3Crect x='.5' y='.5' width='10' height='12' fill='%23f1efe4' stroke='%23dedbcd'/%3E%3Cpath d='M3 5.500l2.500 2.500L8 5.500' fill='none' stroke='%23c2bfae' stroke-width='1.500'/%3E%3C/svg%3E") no-repeat right center;
    color: #aca899;
    opacity: 1;
}
.text-style, .dim-style {
    width: 70px;
}
.combo-box {
    display: flex;
    align-items: center;
    height: 15px;
    border: 1px solid #a5b7cf;
    background: #fff;
}
.combo-box .combo {
    flex: 1;
    height: 13px;
    border: none;
}
.layer-box {
    width: 208px;
}
.layer-icons {
    width: 54px;
    height: 12px;
    margin-left: 2px;
}
.layer-box .combo {
    padding-left: 2px;
}
.props {
    gap: 4px;
    padding-right: 1px;
}
.color-box {
    width: 104px;
}
.swatch {
    width: 8px;
    height: 8px;
    margin-left: 2px;
}
.rule {
    height: 1px;
    margin-left: 3px;
    background: #222;
}
.line-box {
    width: 111px;
}
.line-box .rule {
    width: 41px;
}
.weight-box {
    width: 87px;
}
.weight-box .rule {
    width: 24px;
}
.plot-style {
    width: 84px;
    padding-left: 6px;
}

/* drawing window */
.workspace {
    display: flex;
    flex: 1;
    min-height: 0;
}
.side {
    width: 19px;
    padding-right: 1px;
}
.modify-tools {
    width: 18px;
    margin-left: 1px;
}
.side .tools {
    display: grid;
    grid-auto-rows: 1fr;
    height: 269px;
    padding-top: 6px;
    padding-bottom: 2px;
    border-right: 1px solid #c9c6b4;
    border-bottom: 1px solid #b5b29f;
    background: linear-gradient(transparent 1px, #fff 1px 2px, #aca899 2px 3px, transparent 3px 4px, #fff 4px 5px, #aca899 5px 6px, transparent 6px);
}
.modify-tools .tools {
    height: 254px;
}
.side button {
    display: flex;
    align-items: center;
    justify-content: center;
    min-height: 0;
}
.side svg {
    width: 12px;
    height: 12px;
}
.side .mtext {
    font-size: 12px;
    line-height: 12px;
}
.ln {
    fill: none;
    stroke: #28425f;
}
.shape {
    fill: #dce9f6;
}
.pt {
    fill: #2667a5;
}
.document {
    display: grid;
    grid-template-columns: 1fr 13px;
    grid-template-rows: 1fr 12px;
    flex: 1;
    min-width: 0;
}
.canvas {
    min-height: 0;
    overflow: hidden;
    border-left: 1px solid #55534a;
    background: #000;
}
.drawing {
    width: 100%;
    height: 100%;
}
.thin {
    fill: none;
    stroke: #e6e6e6;
    stroke-width: 1;
}
.solid {
    fill: #fff;
}
.ring {
    fill: #000;
    stroke: #ddd;
    stroke-width: 1;
}
.note {
    fill: #fff;
    font-family: "Noto Sans CJK SC", sans-serif;
    font-size: 6px;
}
.axis {
    fill: #e4e4e4;
    font-family: Roboto, "Liberation Sans", sans-serif;
    font-size: 15px;
    font-weight: 300;
}
.vscroll, .hscroll {
    display: grid;
    background: #f8f8f2;
}
.vscroll {
    grid-template-rows: 12px 8fr 12px 7fr 12px;
    padding-left: 1px;
}
.hscroll {
    grid-template-columns: 12px 4fr 12px 3fr 12px;
    width: 33%;
    margin-right: 1px;
}
.sb, .thumb {
    display: flex;
    align-items: center;
    justify-content: center;
    border: 1px solid #b1c5f0;
    border-radius: 2px;
    background: #c8d8fc;
}
.sb svg {
    width: 8px;
    height: 8px;
    fill: none;
    stroke: #2f4f8b;
    stroke-width: 1.5px;
}
.tabrow {
    display: flex;
    border-left: 1px solid #8d8b80;
}
.tab-nav {
    display: flex;
    width: 51px;
}
.tab-nav button {
    flex: 1;
    border-right: 1px solid #c5c2b0;
}
.tab-nav svg {
    width: 8px;
    height: 8px;
    margin: auto;
}
.sheet {
    position: relative;
    isolation: isolate;
    height: 11px;
    padding: 0 6px;
    background: #222;
    clip-path: polygon(0 0, 100% 0, calc(100% - 4px) 100%, 4px 100%);
    line-height: 11px;
}
.sheet::before {
    content: "";
    position: absolute;
    inset: 0 1px 1px;
    z-index: -1;
    background: #f3f1e5;
    clip-path: polygon(0 0, 100% 0, calc(100% - 4px) 100%, 4px 100%);
}
.sheet.current {
    color: #fff;
    font-weight: bold;
}
.sheet.current, .sheet.current::before {
    background: #000;
}
.tab-fill {
    flex: 1;
    border-top: 1px solid #aaa796;
}

/* command window */
.command {
    height: 43px;
    margin-top: 1px;
    padding: 4px 6px 2px 12px;
    border-top: 2px solid #fff;
    background: linear-gradient(90deg, transparent 4px, #fff 4px 5px, #aca899 5px 6px, transparent 6px 7px, #fff 7px 8px, #aca899 8px 9px, transparent 9px);
    box-shadow: inset 0 2px 0 #48473f;
}
.cmd-box {
    display: flex;
    flex-direction: column;
    height: 36px;
    border-top: 1px solid #48473f;
    border-left: 1px solid #48473f;
    background: #fff;
    font-family: "Liberation Serif", "Noto Sans CJK SC", serif;
    font-size: 11px;
}
.cmd-log {
    flex: 1;
    margin: 0;
    border-bottom: 1px solid #aaa;
    line-height: 11px;
}
.cmd-line {
    display: flex;
    height: 12px;
    line-height: 12px;
}
.cmd-line input {
    flex: 1;
    min-width: 0;
    outline: none;
}
.cmd-scroll {
    display: grid;
    grid-template-columns: 11px 11px 1fr 11px;
    width: 57px;
    padding-right: 12px;
    background: #f4f2e8;
}

/* status */
.statusbar {
    display: flex;
    align-items: center;
    gap: 2px;
    height: 14px;
    padding-left: 3px;
    border-top: 1px solid #b5b29f;
    font-size: 8px;
}
.coords {
    width: 175px;
    height: 12px;
    border: 1px solid #c2bfae;
    font-family: "DejaVu Sans Mono", monospace;
    font-size: 7px;
    line-height: 11px;
}
.statusbar button {
    height: 12px;
    padding: 0 1px;
    border: 1px solid;
    border-color: #fff #aca899 #aca899 #fff;
    line-height: 10px;
}
.statusbar .on {
    border-color: #55534a #fff #fff #55534a;
}
.status-tray {
    display: flex;
    align-items: center;
    gap: 5px;
    margin-left: auto;
    padding-right: 2px;
}
.comm {
    width: 17px;
    height: 12px;
    border: 1px solid #c2bfae;
}
.more {
    width: 5px;
    height: 3px;
}

/* taskbar */
.taskbar {
    display: flex;
    height: 21px;
    background: linear-gradient(#3f8cf3, #245edb 12%, #2560de 85%, #1a45b0);
    color: #fff;
    font-family: "DejaVu Sans Mono", "Noto Sans CJK SC", monospace;
    font-size: 7px;
}
.taskbar svg {
    flex: none;
    width: 12px;
    height: 12px;
}
.start {
    display: flex;
    align-items: center;
    gap: 4px;
    width: 67px;
    padding-left: 8px;
    border-radius: 0 8px 8px 0;
    background: linear-gradient(#6cc069, #3c993c 20%, #379637 75%, #256f27);
    box-shadow: inset -2px 0 2px #245f25;
    font-family: "Noto Sans CJK SC", sans-serif;
    font-size: 13px;
    font-style: italic;
    line-height: 20px;
    text-shadow: 1px 1px 1px #1d4a1d;
}
.start svg {
    width: 14px;
    height: 14px;
}
.quick {
    display: flex;
    align-items: center;
    gap: 4px;
    width: 71px;
    padding-left: 8px;
}
.chev {
    align-self: flex-start;
    margin-left: 4px;
    color: #fff;
    font-size: 9px;
    line-height: 14px;
    text-decoration: none;
}
.tasks {
    display: grid;
    grid-template-columns: repeat(9, 1fr);
    flex: 1;
    gap: 1px;
    min-width: 0;
    padding: 1px 0;
}
.tasks button {
    display: flex;
    align-items: center;
    gap: 2px;
    min-width: 0;
    padding-left: 6px;
    border-radius: 2px;
    background: linear-gradient(#5fa0fb, #3c81f3 20%, #3a7cf0 80%, #2f66d2);
    white-space: nowrap;
}
.tasks .active {
    background: #1c4fb8;
    box-shadow: inset 1px 1px 2px #0f3078;
}
.tasks b {
    font-size: 8px;
    font-weight: normal;
}
.caret {
    margin-left: auto;
    margin-right: 4px;
    border: 2px solid transparent;
    border-top-color: #fff;
    border-bottom: none;
}
.lang {
    width: 26px;
}
.lang svg {
    margin: auto;
}
.tray {
    display: flex;
    align-items: center;
    width: 121px;
    background: linear-gradient(90deg, #245edb 6px, #0c59b9 6px 7px, transparent 7px), linear-gradient(#3fb4f5, #1290e8 15%, #1392ea 85%, #0c70c4);
}
.tray .hide {
    margin-right: 1px;
}
.tray time {
    margin-left: auto;
    padding-right: 8px;
}

.watermark {
    position: absolute;
    right: 48px;
    bottom: 26px;
    width: 184px;
    height: 90px;
    overflow: visible;
    pointer-events: none;
}
.watermark text {
    fill: #fff;
    stroke: #cfcfcb;
    stroke-width: 2px;
    stroke-linejoin: round;
    paint-order: stroke;
    font-family: "Open Sans", "Noto Sans CJK SC", sans-serif;
    font-weight: bold;
}
.paw {
    fill: rgba(255, 255, 255, 0.7);
    stroke: #cfcfcb;
}
.brand {
    font-size: 36px;
}
.du {
    font-size: 20px;
}
.cn {
    font-size: 31px;
}
.watermark .site {
    font-size: 21px;
    font-weight: normal;
    stroke-width: 1px;
}
```
